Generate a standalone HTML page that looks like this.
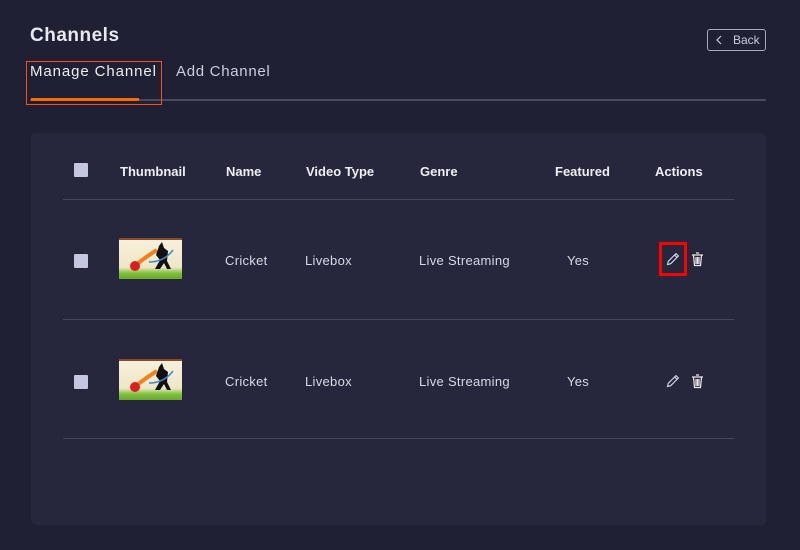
<!DOCTYPE html><html><head><style>
body{margin:0;width:800px;height:550px;background:#1f2033;font-family:"Liberation Sans",sans-serif;color:#e8e8f0;position:relative;overflow:hidden}
.a{position:absolute}
.cb{position:absolute;width:14px;height:14px;background:#c5c6e0;border-radius:1px}
.h{font-size:13px;font-weight:bold;color:#eeeef3;top:164px}
.c{font-size:13px;color:#d8d8e4;letter-spacing:.3px}
.line{position:absolute;left:63px;width:671px;height:1px;background:#45465c}
.th{position:absolute;left:119px;width:63px;height:39px;background:linear-gradient(#f7f1dc,#efe6c6 70%,#7ec23a 85%,#6aa830);border-top:2px solid #8a4a2a;overflow:hidden}
</style></head><body>
<div class="a" style="left:30px;top:25px;font-size:19px;font-weight:bold;letter-spacing:.5px">Channels</div>
<div class="a" style="left:707px;top:29px;width:57px;height:20px;border:1px solid #aab;border-radius:3px;font-size:12px;color:#ccd;line-height:20px"><svg class="a" style="left:8px;top:5px" width="6" height="10"><path d="M5 1L1 5l4 4" fill="none" stroke="#ccd" stroke-width="1.2"/></svg><span style="position:absolute;left:25px">Back</span></div>
<div class="a" style="left:30px;top:63px;font-size:15px;color:#eee;letter-spacing:.9px">Manage Channel</div>
<div class="a" style="left:176px;top:63px;font-size:15px;color:#ccd;letter-spacing:.7px">Add Channel</div>
<div class="a" style="left:30px;top:99px;width:736px;height:2px;background:#4a4b60"></div>
<div class="a" style="left:31px;top:98px;width:108px;height:3px;background:#ff6a00"></div>
<div class="a" style="left:26px;top:61px;width:136px;height:44px;border:1px solid #ff4d1a;box-sizing:border-box"></div>
<div class="a" style="left:31px;top:133px;width:735px;height:392px;background:#26273c;border-radius:5px"></div>
<div class="cb" style="left:74px;top:163px"></div>
<div class="a h" style="left:120px">Thumbnail</div><div class="a h" style="left:226px">Name</div><div class="a h" style="left:306px">Video Type</div><div class="a h" style="left:420px">Genre</div><div class="a h" style="left:555px">Featured</div><div class="a h" style="left:655px">Actions</div>
<div class="line" style="top:199px"></div>
<div class="cb" style="left:74px;top:254px"></div>
<div class="th" style="top:238px"><svg width="63" height="39"><path d="M18 24q10-8 20-14" stroke="#f08020" stroke-width="4" fill="none"/><circle cx="16" cy="26" r="5" fill="#d82020"/><path d="M40 6l3-4 2 6 4 3-1 10 4 8h-4l-3-6-4 6h-5l5-9-4-5z" fill="#111"/><path d="M30 22q15 0 24-12" stroke="#3a8ad0" stroke-width="1.5" fill="none"/></svg></div>
<div class="a c" style="left:225px;top:253px">Cricket</div><div class="a c" style="left:305px;top:253px">Livebox</div><div class="a c" style="left:419px;top:253px">Live Streaming</div><div class="a c" style="left:567px;top:253px">Yes</div>
<div class="a" style="left:659px;top:242px;width:28px;height:34px;border:3px solid #ff0000;box-sizing:border-box"></div>
<svg class="a" style="left:666px;top:252px" width="14" height="14" viewBox="0 0 14 14"><path d="M1.5 12.5l.8-3.2L10 1.6l2.4 2.4-7.7 7.7zM8.6 3l2.4 2.4" fill="none" stroke="#dde" stroke-width="1.1"/></svg>
<svg class="a" style="left:691px;top:252px" width="13" height="15" viewBox="0 0 13 15"><path d="M1 3h11M5 1h3M2.5 3.5l1 10h6l1-10M5 5v7M6.5 5v7M8 5v7" fill="none" stroke="#f0e8e8" stroke-width="1.2"/></svg>
<div class="line" style="top:319px"></div>
<div class="cb" style="left:74px;top:375px"></div>
<div class="th" style="top:359px"><svg width="63" height="39"><path d="M18 24q10-8 20-14" stroke="#f08020" stroke-width="4" fill="none"/><circle cx="16" cy="26" r="5" fill="#d82020"/><path d="M40 6l3-4 2 6 4 3-1 10 4 8h-4l-3-6-4 6h-5l5-9-4-5z" fill="#111"/><path d="M30 22q15 0 24-12" stroke="#3a8ad0" stroke-width="1.5" fill="none"/></svg></div>
<div class="a c" style="left:225px;top:374px">Cricket</div><div class="a c" style="left:305px;top:374px">Livebox</div><div class="a c" style="left:419px;top:374px">Live Streaming</div><div class="a c" style="left:567px;top:374px">Yes</div>
<svg class="a" style="left:666px;top:374px" width="14" height="14" viewBox="0 0 14 14"><path d="M1.5 12.5l.8-3.2L10 1.6l2.4 2.4-7.7 7.7zM8.6 3l2.4 2.4" fill="none" stroke="#dde" stroke-width="1.1"/></svg>
<svg class="a" style="left:691px;top:374px" width="13" height="15" viewBox="0 0 13 15"><path d="M1 3h11M5 1h3M2.5 3.5l1 10h6l1-10M5 5v7M6.5 5v7M8 5v7" fill="none" stroke="#f0e8e8" stroke-width="1.2"/></svg>
<div class="line" style="top:438px"></div>
</body></html>
